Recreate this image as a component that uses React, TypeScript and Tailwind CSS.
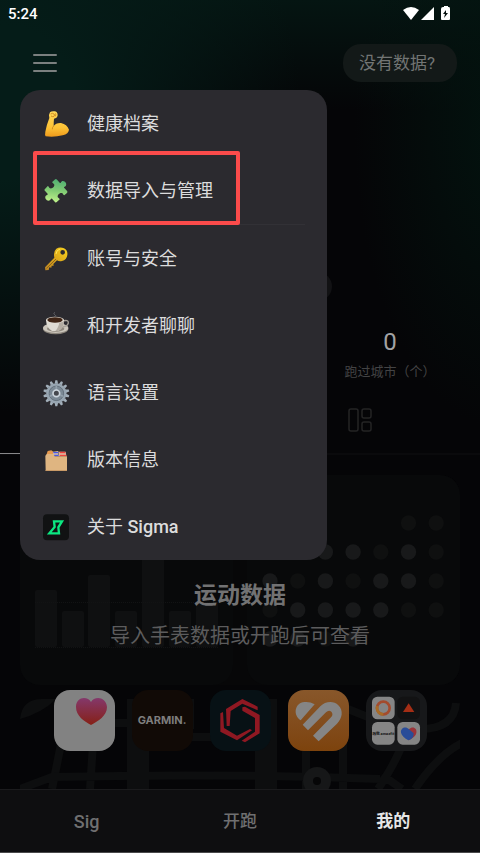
import type { ReactNode } from "react";

const gearTeeth = Array.from({ length: 14 }, (_, i) => (i * 360) / 14);

function Icon({ children }: { children: ReactNode }) {
  return (
    <svg viewBox="0 0 84 84" className="size-7 shrink-0" aria-hidden="true">
      {children}
    </svg>
  );
}

function ArmIcon() {
  return (
    <Icon>
      <defs>
        <linearGradient id="arm" x1="0" y1="0" x2="0" y2="1">
          <stop offset="0" stopColor="#ffd85a" />
          <stop offset="0.65" stopColor="#fdc235" />
          <stop offset="1" stopColor="#ee9a1c" />
        </linearGradient>
      </defs>
      <path
        d="M24 7Q29 2 39 4Q47 6 47 16Q45 26 36 26Q35 36 35 48Q42 38 57 39Q75 43 81 59Q80 71 62 76Q38 82 11 79Q8 76 10 65Q14 44 22 24Q20 12 24 7Z"
        fill="url(#arm)"
      />
      <path d="M26 12Q32 8 36 12Q40 15 36 19Q31 21 27 18M35 48Q30 53 31 58M40 10Q43 14 40 19" fill="none" stroke="#c9821b" strokeWidth="2.5" />
    </Icon>
  );
}

function PuzzleIcon() {
  return (
    <Icon>
      <defs>
        <linearGradient id="puzzle" gradientUnits="userSpaceOnUse" x1="26" y1="-22" x2="-26" y2="22">
          <stop offset="0" stopColor="#4fae72" />
          <stop offset="0.5" stopColor="#82cb74" />
          <stop offset="1" stopColor="#bdf08a" />
        </linearGradient>
      </defs>
      <g transform="translate(42 41) rotate(-42)">
        <path
          d="M-22 -26Q-25 -26 -25 -23V-9C-27 -7 -29 -9 -33 -9C-42 -8 -42 8 -33 9C-29 9 -27 7 -25 9V23Q-25 27 -21 27H-9C-7 25 -9 23 -9 19C-8 11 8 11 9 19C9 23 7 25 9 27H20Q24 27 24 23V9C26 7 28 9 31 9C40 8 40 -8 31 -9C28 -9 26 -7 24 -9V-23Q24 -27 20 -27H9C7 -25 9 -23 9 -19C8 -11 -8 -11 -9 -19C-9 -23 -7 -25 -9 -27Z"
          fill="url(#puzzle)"
        />
      </g>
    </Icon>
  );
}

function KeyIcon() {
  return (
    <Icon>
      <defs>
        <linearGradient id="key" x1="1" y1="0" x2="0" y2="1">
          <stop offset="0" stopColor="#f7d21f" />
          <stop offset="0.5" stopColor="#dca81a" />
          <stop offset="1" stopColor="#b98225" />
        </linearGradient>
      </defs>
      <path
        fillRule="evenodd"
        d="M43 11Q54 4 66 10Q78 17 76 30Q74 45 60 48Q51 50 45 46L34 57L35 62L29 62L28 68L22 67L20 75L10 76L9 67L37 38Q33 20 43 11ZM62 15A7 7 0 1 0 62 29A7 7 0 1 0 62 15Z"
        fill="url(#key)"
      />
      <path d="M14 70L42 42" stroke="#8f641c" strokeWidth="3" />
      <path d="M42 27Q43 15 54 12" fill="none" stroke="#ffe45b" strokeWidth="3" />
    </Icon>
  );
}

function CoffeeIcon() {
  return (
    <Icon>
      <ellipse cx="41" cy="51" rx="38" ry="16" fill="#8b857c" />
      <ellipse cx="41" cy="48" rx="38" ry="15" fill="#cbc5bb" />
      <ellipse cx="41" cy="50" rx="26" ry="9" fill="#8f887e" />
      <path d="M61 27Q80 22 79 33Q76 45 58 44" fill="none" stroke="#a8a299" strokeWidth="4" />
      <path d="M12 24H66Q66 48 49 57H30Q13 47 12 24Z" fill="#dedad2" />
      <path d="M52 26H66Q66 48 49 57H40Q52 44 52 26Z" fill="#b3aca2" />
      <ellipse cx="39" cy="24" rx="27" ry="10" fill="#e9e5dd" />
      <ellipse cx="39" cy="24" rx="23" ry="8" fill="#3f2415" />
      <path d="M37 15Q45 11 37 7Q34 4 38 1" fill="none" stroke="#66666a" strokeWidth="3" />
    </Icon>
  );
}

function GearIcon() {
  return (
    <Icon>
      <g transform="translate(43 43)">
        {gearTeeth.map((angle) => (
          <path key={angle} d="M-5 -29L-3 -39H3L5 -29Z" fill="#a2afba" transform={`rotate(${angle})`} />
        ))}
        <circle r="26" fill="none" stroke="#98a6b2" strokeWidth="9" />
        <circle r="22" fill="#7b8995" />
        <circle r="22" fill="none" stroke="#5f6c78" strokeWidth="2" />
        <path d="M0 0V-22M0 0L20 9M0 0L-20 9" stroke="#93a1ad" strokeWidth="5" />
        <circle r="10" fill="#45484e" stroke="#cbd5dd" strokeWidth="5" />
      </g>
    </Icon>
  );
}

function FolderIcon() {
  return (
    <Icon>
      <path d="M12 30L17 15L28 13L34 17V30Z" fill="#e79a4f" />
      <path d="M33 17L49 15V29H33Z" fill="#d9bfa4" />
      <path d="M34 18H49V22H34ZM36 26H51V30H36Z" fill="#4857e8" />
      <path d="M50 17H71L73 30H50Z" fill="#dcbfa6" />
      <path d="M53 17H70V22H53ZM53 26H73V31H53Z" fill="#ee443e" />
      <path d="M10 29L15 24L34 24L38 31H75V75H11Z" fill="#dfb581" />
      <path d="M11 72H75V75H11Z" fill="#c99a67" />
    </Icon>
  );
}

function SigmaIcon() {
  return (
    <Icon>
      <rect x="3" y="4" width="78" height="78" rx="12" fill="#111213" />
      <path d="M36 25H60L49 43L51 61H22L38 42Z" fill="none" stroke="#0be881" strokeWidth="7" />
    </Icon>
  );
}

const groups: { icon: ReactNode; label: string; name?: string }[][] = [
  [
    { icon: <ArmIcon />, label: "健康档案" },
    { icon: <PuzzleIcon />, label: "数据导入与管理" },
  ],
  [
    { icon: <KeyIcon />, label: "账号与安全" },
    { icon: <CoffeeIcon />, label: "和开发者聊聊" },
    { icon: <GearIcon />, label: "语言设置" },
    { icon: <FolderIcon />, label: "版本信息" },
    { icon: <SigmaIcon />, label: "关于 ", name: "Sigma" },
  ],
];

function Menu() {
  return (
    <div className="absolute left-5 top-[90px] z-10 w-[307px] overflow-hidden rounded-[20px] bg-[#2b2a2f]">
      {groups.map((group, i) => (
        <div key={i}>
          {i > 0 && <div className="mx-[22px] h-px bg-[#323136]" />}
          {group.map((item) => (
            <button
              key={item.label}
              type="button"
              className="flex h-[67px] w-full items-center gap-[17px] px-[22px] text-left text-lg text-[#dcdcdd]"
            >
              {item.icon}
              <span className="pt-px">
                {item.label}
                {item.name && <span className="font-medium">{item.name}</span>}
              </span>
            </button>
          ))}
        </div>
      ))}
      <div className="pointer-events-none absolute left-[13px] top-[61px] h-[74px] w-[207px] rounded-xs border-4 border-[#fb4b4b]" />
    </div>
  );
}

function StatusBar() {
  return (
    <div className="flex h-7 items-center justify-between pl-2 pr-[29px] text-[15px] font-medium text-white">
      <span>5:24</span>
      <svg viewBox="0 0 49 16" className="h-4 w-[49px]" fill="#fff" aria-hidden="true">
        <path d="M1 4Q9-2 17 4L9 14Z" />
        <path d="M32 1V14H19Z" />
        <path d="M41 1H42V0H46V1H47Q48 1 48 3V13Q48 14 47 14H40Q39 14 39 13V3Q39 1 41 1Z" />
        <path d="M44 4L41 8H43L42 12L46 7H44Z" fill="#06110f" />
      </svg>
    </div>
  );
}

const bars = [
  [15, 115],
  [42, 136],
  [68, 100],
  [95, 136],
  [122, 60],
  [149, 136],
  [176, 127],
];

const dotRows = [
  [0, 0, 0, 0, 0, 1, 1],
  [0, 1, 2, 2, 1, 2, 1],
  [2, 1, 2, 1, 2, 2, 1],
  [1, 2, 2, 2, 2, 1, 1],
  [2, 2, 1, 2, 0, 0, 0],
];
const dotFill = ["none", "#0f1010", "#18191a"];

function SportCard() {
  return (
    <section className="relative mx-5 mt-5 flex h-[210px] flex-col items-center justify-center rounded-[20px] bg-[#070708] pt-[71px]">
      <div className="absolute inset-0 flex justify-between">
        <svg viewBox="0 0 213 210" className="h-full w-[213px]" aria-hidden="true">
          <rect width="213" height="210" rx="20" fill="#08090a" />
          {bars.map(([x, y]) => (
            <rect key={x} x={x} y={y} width="22" height={172 - y} rx="2" fill="#0f1011" />
          ))}
          <path d="M15 127.500H198M15 172.500H198" stroke="#121314" strokeDasharray="1 1" />
        </svg>
        <svg viewBox="0 0 213 210" className="h-full w-[213px]" aria-hidden="true">
          <rect width="213" height="210" rx="20" fill="#08090a" />
          {dotRows.map((row, r) =>
            row.map((tone, c) => (
              <circle key={`${r}-${c}`} cx={23 + c * 27.700} cy={48 + r * 29} r="7.700" fill={dotFill[tone]} />
            )),
          )}
        </svg>
      </div>
      <h2 className="relative text-[23px] leading-8 font-bold text-[#727273]">运动数据</h2>
      <p className="relative mt-2 text-xl leading-8 text-[#5c5c5d]">导入手表数据或开跑后可查看</p>
    </section>
  );
}

const tile = "flex size-[61px] items-center justify-center overflow-hidden rounded-2xl";

function Apps() {
  return (
    <section className="relative mx-5 mt-[5px] min-h-0 flex-1">
      <svg
        viewBox="0 0 440 90"
        preserveAspectRatio="xMidYMin slice"
        className="absolute inset-x-0 top-[9px] h-[90px] w-full"
        fill="none"
        stroke="#0d0e0f"
        strokeWidth="8"
        aria-hidden="true"
      >
        <path d="M0 20Q2 0 22 0H36Q22 14 0 20Z" fill="#0d0e0f" stroke="none" />
        <path d="M42 40L32 90M76 0L70 90M0 90L32 78Q200 74 360 80M90 24H112M170 38H192M170 0V30M286 40V90M323 0V90M328 10L350 19L400 30Q434 30 436 4M384 40Q378 60 358 90M362 76L382 90M442 44Q418 56 395 90" />
        <path d="M118 0V90M246 0V90" strokeWidth="22" />
        <circle cx="297" cy="82" r="14" fill="#161718" stroke="none" />
        <circle cx="297" cy="82" r="4" fill="#060607" stroke="none" />
      </svg>
      <div className="relative flex justify-center gap-[17px]">
        <div className={`${tile} bg-[#828282]`}>
          <svg viewBox="0 0 61 61" className="size-full" aria-hidden="true">
            <defs>
              <linearGradient id="heart" x1="0" y1="0" x2="0" y2="1">
                <stop offset="0" stopColor="#84386b" />
                <stop offset="1" stopColor="#862016" />
              </linearGradient>
            </defs>
            <path d="M37 12C34 6 22 6 22 17C22 26 30 31 37 35C44 31 53 26 53 17C52 6 40 6 37 12Z" fill="url(#heart)" />
          </svg>
        </div>
        <div className={`${tile} bg-[#110a06]`}>
          <span className="font-['Inter',sans-serif] text-[11px] font-bold text-[#7e7e7e]">GARMIN.</span>
        </div>
        <div className={`${tile} bg-[#071115]`}>
          <svg viewBox="0 0 183 183" className="size-full" fill="#8f1822" aria-hidden="true">
            <path d="M50 108L48 57L97 27L143 50V61L97 41L62 63L59 108Z" />
            <path d="M97 52L105 50L149 75V130L105 157L95 152L135 125V84L97 62Z" />
            <path d="M31 70L39 66L42 114L81 137L120 117L126 121L81 151L31 125Z" />
          </svg>
        </div>
        <div className={`${tile} bg-linear-to-b from-[#88572a] to-[#7d430d]`}>
          <svg viewBox="0 0 183 183" className="size-full" fill="#858585" aria-hidden="true">
            <path d="M38 91C14 75 20 39 49 36Q65 34 80 43Z" />
            <path d="M44 104L97 49C112 33 138 32 151 46C167 62 163 85 147 101L92 154L75 137L129 82Q137 73 130 65Q122 59 114 67L60 121Z" />
          </svg>
        </div>
        <div className={`${tile} bg-[#17181a]`}>
          <svg viewBox="0 0 183 183" className="size-full" aria-hidden="true">
            <rect x="18" y="20" width="68" height="68" rx="16" fill="#858585" />
            <circle cx="52" cy="54" r="19" fill="none" stroke="#a34b2d" strokeWidth="8" />
            <path d="M52 73A19 19 0 0 1 34 48" fill="none" stroke="#a86b25" strokeWidth="8" />
            <rect x="94" y="20" width="68" height="68" rx="16" fill="#121213" />
            <path d="M111 66L128 40L145 66Z" fill="#a52e15" />
            <rect x="18" y="96" width="68" height="68" rx="16" fill="#858585" />
            <text x="52" y="134" textAnchor="middle" fontFamily="Inter, 'Noto Sans CJK SC', sans-serif" fontSize="11" fontWeight="800" fill="#202020">
              跃我 amazfit
            </text>
            <rect x="94" y="96" width="68" height="68" rx="16" fill="#858585" />
            <path d="M129 118C140 106 154 114 151 129Q149 141 128 151Z" fill="#9b3339" />
            <path d="M129 118C119 107 103 114 105 128Q107 139 127 151Q144 146 143 130Z" fill="#294c98" />
          </svg>
        </div>
      </div>
    </section>
  );
}

export default function App() {
  return (
    <div className="relative flex h-screen min-h-[853px] flex-col overflow-hidden bg-[#050507] bg-[radial-gradient(ellipse_300px_310px_at_0%_12%,#051c18_25%,transparent),radial-gradient(ellipse_150px_300px_at_105%_15%,#03130f,transparent),linear-gradient(to_bottom,#051512,transparent_110px)] font-['Roboto','Noto_Sans_CJK_SC',sans-serif]">
      <StatusBar />
      <header className="mt-4 flex items-center justify-between pl-[33px] pr-[23px]">
        <button type="button" aria-label="菜单" className="flex w-[24px] flex-col gap-[6px]">
          <span className="h-[2px] rounded-full bg-[#7b807f]" />
          <span className="h-[2px] rounded-full bg-[#7b807f]" />
          <span className="h-[2px] rounded-full bg-[#7b807f]" />
        </button>
        <button type="button" className="h-[38px] rounded-[18px] bg-[#131918] pl-4 pr-[22px] text-[17px] leading-6 text-[#727574]">
          没有数据?
        </button>
      </header>

      <main className="flex min-h-0 flex-1 flex-col">
        <div className="mt-[190px] flex justify-center pl-[154px]">
          <span className="size-[29px] rounded-full bg-[#121214]" />
        </div>
        <div className="mt-[27px] flex justify-end px-[15px]">
          <div className="w-1/3 text-center">
            <div className="text-2xl leading-7 text-[#a3a3a4]">0</div>
            <div className="mt-[6px] text-[13px] leading-5 whitespace-nowrap text-[#434344]">跑过城市（个）</div>
          </div>
        </div>
        <div className="mt-[26px] flex justify-end">
          <button type="button" aria-label="布局" className="flex w-1/2 justify-center">
            <svg viewBox="0 0 24 24" className="size-6" fill="none" stroke="#242425" strokeWidth="1.500" aria-hidden="true">
              <rect x="1" y="1" width="9" height="22" rx="2" />
              <rect x="14" y="1" width="9" height="9" rx="2" />
              <rect x="14" y="14" width="9" height="9" rx="2" />
            </svg>
          </button>
        </div>
        <div className="mt-[21px] h-[2px] shrink-0 bg-[#0a0a0c]">
          <div className="h-px w-1/2 bg-[#88888a]" />
        </div>
        <SportCard />
        <Apps />
      </main>

      <nav className="relative grid h-16 shrink-0 grid-cols-3 border-t border-b border-t-[#1b1b1d] border-b-[#4a4a4b] bg-[#0e0e10] px-[10px] pt-[2px] text-[17px] font-medium text-[#6f6f70]">
        <button type="button" className="text-lg">Sig</button>
        <button type="button">开跑</button>
        <button type="button" aria-current="page" className="font-bold text-[#e6e6e6]">
          我的
        </button>
      </nav>

      <Menu />
    </div>
  );
}
